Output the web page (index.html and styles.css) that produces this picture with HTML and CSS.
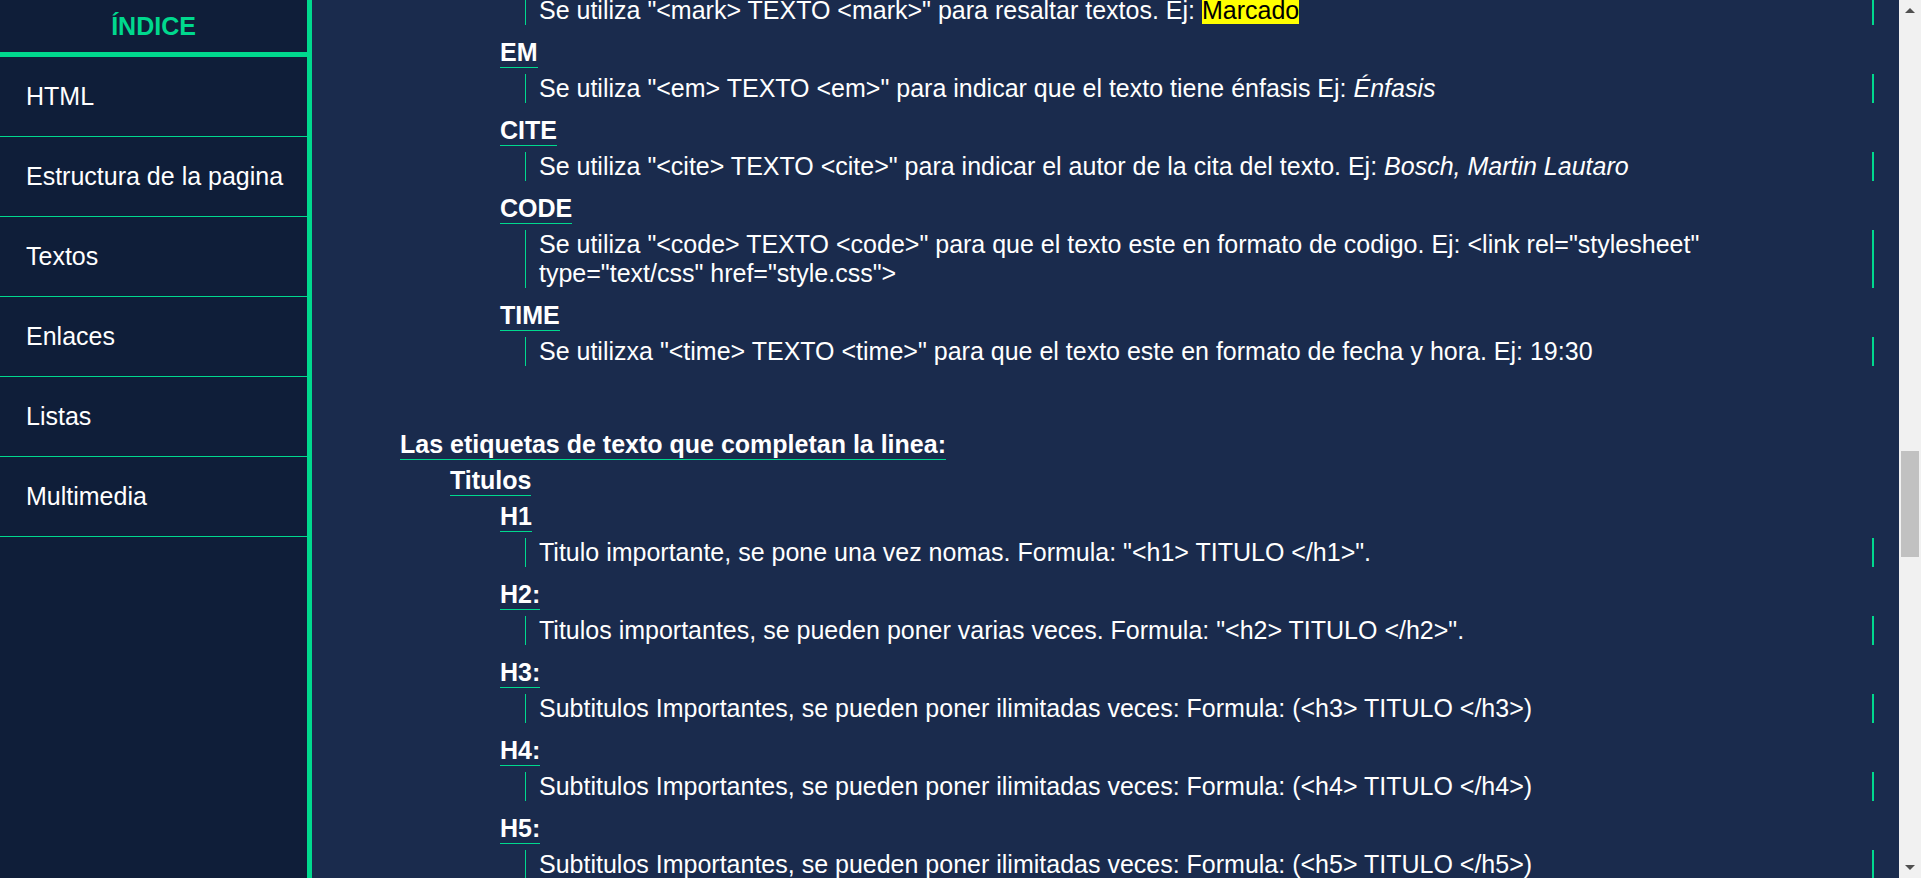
FILE: index.html
```html
<!DOCTYPE html>
<html lang="es">
<head>
<meta charset="utf-8">
<title>Textos - HTML</title>
<link rel="stylesheet" href="styles.css">
</head>
<body>
<div class="page">
  <nav class="sidebar">
    <div class="sidebar-title">ÍNDICE</div>
    <ul class="menu">
      <li class="menu-item">HTML</li>
      <li class="menu-item">Estructura de la pagina</li>
      <li class="menu-item">Textos</li>
      <li class="menu-item">Enlaces</li>
      <li class="menu-item">Listas</li>
      <li class="menu-item">Multimedia</li>
    </ul>
  </nav>
  <main class="main">
    <div class="scrolled">
      <div class="level level-items">
        <p class="desc">Se utiliza "&lt;mark&gt; TEXTO &lt;mark&gt;" para resaltar textos. Ej: <mark>Marcado</mark></p>
        <div class="term">EM</div>
        <p class="desc">Se utiliza "&lt;em&gt; TEXTO &lt;em&gt;" para indicar que el texto tiene énfasis Ej: <em>Énfasis</em></p>
        <div class="term">CITE</div>
        <p class="desc">Se utiliza "&lt;cite&gt; TEXTO &lt;cite&gt;" para indicar el autor de la cita del texto. Ej: <cite>Bosch, Martin Lautaro</cite></p>
        <div class="term">CODE</div>
        <p class="desc">Se utiliza "&lt;code&gt; TEXTO &lt;code&gt;" para que el texto este en formato de codigo. Ej: <code>&lt;link rel="stylesheet" type="text/css" href="style.css"&gt;</code></p>
        <div class="term">TIME</div>
        <p class="desc">Se utilizxa "&lt;time&gt; TEXTO &lt;time&gt;" para que el texto este en formato de fecha y hora. Ej: <time>19:30</time></p>
      </div>
      <section class="section">
        <h3 class="term">Las etiquetas de texto que completan la linea:</h3>
        <div class="level">
          <h4 class="term">Titulos</h4>
          <div class="level">
            <div class="term">H1</div>
            <p class="desc">Titulo importante, se pone una vez nomas. Formula: "&lt;h1&gt; TITULO &lt;/h1&gt;".</p>
            <div class="term">H2:</div>
            <p class="desc">Titulos importantes, se pueden poner varias veces. Formula: "&lt;h2&gt; TITULO &lt;/h2&gt;".</p>
            <div class="term">H3:</div>
            <p class="desc">Subtitulos Importantes, se pueden poner ilimitadas veces: Formula: (&lt;h3&gt; TITULO &lt;/h3&gt;)</p>
            <div class="term">H4:</div>
            <p class="desc">Subtitulos Importantes, se pueden poner ilimitadas veces: Formula: (&lt;h4&gt; TITULO &lt;/h4&gt;)</p>
            <div class="term">H5:</div>
            <p class="desc">Subtitulos Importantes, se pueden poner ilimitadas veces: Formula: (&lt;h5&gt; TITULO &lt;/h5&gt;)</p>
          </div>
        </div>
      </section>
    </div>
  </main>
  <div class="scrollbar">
    <div class="sb-arrow sb-up"></div>
    <div class="sb-track">
      <div class="sb-thumb"></div>
    </div>
    <div class="sb-arrow sb-down"></div>
  </div>
</div>
</body>
</html>
```
FILE: styles.css
```css
* { box-sizing: border-box; }

html, body {
  margin: 0;
  padding: 0;
  height: 100%;
  overflow: hidden;
}

body {
  font-family: "Liberation Sans", Arial, sans-serif;
  font-size: 25px;
  color: #ffffff;
  background: #1a2b4d;
}

.page {
  display: flex;
  height: 878px;
}

/* Sidebar */
.sidebar {
  width: 312px;
  flex: none;
  background: #0f1e39;
  border-right: 5px solid #00d98e;
  display: flex;
  flex-direction: column;
}

.sidebar-title {
  height: 57px;
  line-height: 52px;
  border-bottom: 5px solid #00d98e;
  text-align: center;
  font-weight: bold;
  font-size: 25px;
  color: #00d98e;
}

.menu {
  list-style: none;
  margin: 0;
  padding: 0;
}

.menu-item {
  height: 80px;
  display: flex;
  align-items: center;
  padding-left: 26px;
  border-bottom: 1px solid #00d98e;
  font-size: 25px;
  color: #ffffff;
}

/* Main content */
.main {
  flex: 1;
  min-width: 0;
  overflow: hidden;
  background: #1a2b4d;
  padding: 0 25px 0 88px;
}

.scrolled {
  margin-top: -4px;
}

.level {
  padding-left: 50px;
}

.level-items {
  padding-left: 100px;
}

.term {
  display: block;
  width: fit-content;
  margin: 0 0 6px 0;
  font-size: 25px;
  font-weight: bold;
  line-height: normal;
  border-bottom: 1px solid #00d98e;
}

.desc {
  margin: 0 0 13px 25px;
  padding: 0 26px 0 13px;
  line-height: normal;
  border-left: 1px solid #00d98e;
  border-right: 2px solid #00d98e;
}

.desc mark {
  background: #ffff00;
  color: #000000;
}

.desc code {
  font-family: inherit;
  font-size: inherit;
}

.section {
  margin-top: 64px;
}

/* Scrollbar */
.scrollbar {
  width: 22px;
  flex: none;
  background: #f1f1f1;
  display: flex;
  flex-direction: column;
}

.sb-arrow {
  height: 21px;
  flex: none;
  display: flex;
  align-items: center;
  justify-content: center;
}

.sb-up::before {
  content: "";
  border-left: 5px solid transparent;
  border-right: 5px solid transparent;
  border-bottom: 5px solid #505050;
}

.sb-down::before {
  content: "";
  border-left: 5px solid transparent;
  border-right: 5px solid transparent;
  border-top: 5px solid #505050;
}

.sb-track {
  flex: 1;
  padding: 430px 2px 0 2px;
}

.sb-thumb {
  height: 106px;
  background: #c1c1c1;
}
```
